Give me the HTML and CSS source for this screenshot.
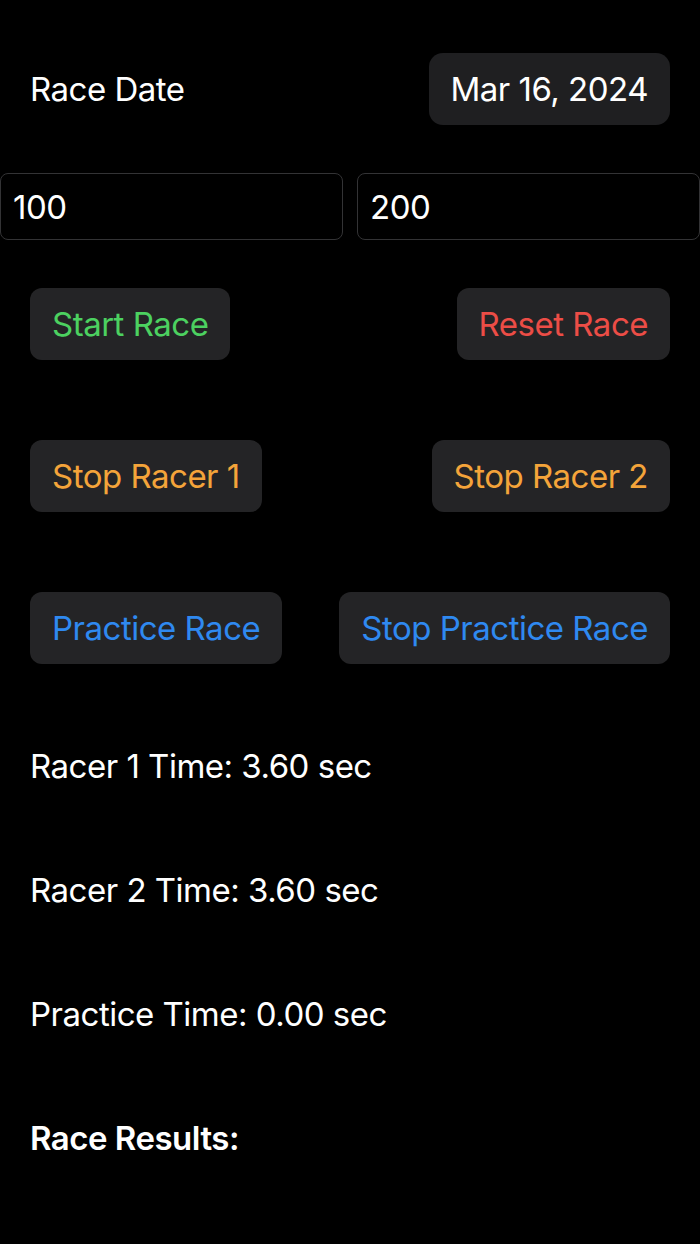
FILE: index.html
```html
<!DOCTYPE html>
<html lang="en">
<head>
    <meta charset="UTF-8" />
    <meta name="viewport" content="width=device-width, initial-scale=1.0"/>
    <title>Race Timer</title>
    <link rel="stylesheet" href="styles.css">
</head>
<body>
    <div class="screen">
        <div class="row date-row">
            <span class="label">Race Date</span>
            <span class="pill">Mar 16, 2024</span>
        </div>

        <div class="fields">
            <div class="field">100</div>
            <div class="field">200</div>
        </div>

        <div class="row btn-row">
            <button class="btn green">Start Race</button>
            <button class="btn red">Reset Race</button>
        </div>

        <div class="row btn-row">
            <button class="btn orange">Stop Racer 1</button>
            <button class="btn orange">Stop Racer 2</button>
        </div>

        <div class="row btn-row">
            <button class="btn blue">Practice Race</button>
            <button class="btn blue">Stop Practice Race</button>
        </div>

        <div class="times">
            <p class="line">Racer 1 Time: 3.60 sec</p>
            <p class="line">Racer 2 Time: 3.60 sec</p>
            <p class="line">Practice Time: 0.00 sec</p>
            <p class="line bold">Race Results:</p>
        </div>
    </div>
</body>
</html>
```

FILE: styles.css
```css
body {
    margin: 0;
    padding: 0;
    background-color: #000;
    color: #fff;
    font-family: 'Inter', 'Noto Sans', sans-serif;
}

.screen {
    width: 700px;
    padding-top: 53px;
}

.row {
    display: flex;
    justify-content: space-between;
    align-items: center;
    padding: 0 30px;
}

.date-row {
    height: 72px;
}

.label {
    font-size: 33px;
    letter-spacing: -0.5px;
}

.pill {
    background: #1f1f21;
    border-radius: 14px;
    padding: 0 22px;
    height: 72px;
    display: flex;
    align-items: center;
    font-size: 33px;
    letter-spacing: -0.5px;
}

/* CAMPOS */
.fields {
    display: flex;
    gap: 14px;
    margin-top: 48px;
}

.field {
    flex: 1;
    height: 67px;
    box-sizing: border-box;
    border: 1px solid #333335;
    border-radius: 8px;
    padding: 0 12px;
    display: flex;
    align-items: center;
    font-size: 33px;
    letter-spacing: -0.5px;
}

/* BOTONES */
.btn-row {
    height: 72px;
    margin-top: 80px;
}

.fields + .btn-row {
    margin-top: 48px;
}

.btn {
    height: 72px;
    padding: 0 22px;
    border: none;
    border-radius: 12px;
    background: #242426;
    font-family: inherit;
    font-size: 33px;
    letter-spacing: -0.5px;
}

.green  { color: #4cd160; }
.red    { color: #ec4d46; }
.orange { color: #f4a43a; }
.blue   { color: #2f89f0; }

/* TIEMPOS */
.times {
    padding: 0 30px;
    margin-top: 82px;
}

.line {
    margin: 0 0 84px;
    height: 40px;
    line-height: 40px;
    font-size: 33px;
    letter-spacing: -0.5px;
}

.bold {
    font-weight: 600;
}
```
